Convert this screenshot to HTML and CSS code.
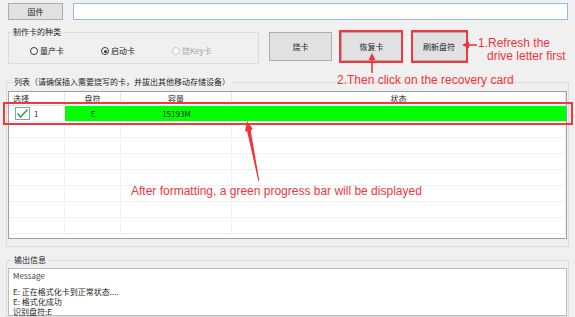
FILE: index.html
```html
<!DOCTYPE html>
<html lang="zh-CN">
<head>
<meta charset="UTF-8">
<title>量产工具</title>
<link rel="stylesheet" href="styles.css">
</head>
<body>

<div class="top-row">
  <button class="btn btn-fw">固件</button>
  <div class="path-input"></div>
</div>

<div class="mid-row">
  <fieldset class="group type-group">
    <legend>制作卡的种类</legend>
    <div class="radios">
      <label class="radio"><span class="dot"></span>量产卡</label>
      <label class="radio"><span class="dot checked"></span>启动卡</label>
      <label class="radio disabled"><span class="dot"></span>烧Key卡</label>
    </div>
  </fieldset>
  <div class="actions">
    <button class="btn btn-burn">烧卡</button>
    <button class="btn btn-restore">恢复卡</button>
    <button class="btn btn-refresh">刷新盘符</button>
  </div>
</div>

<fieldset class="group list-group">
  <legend>列表（请确保插入需要烧写的卡，并拔出其他移动存储设备）</legend>
  <div class="listview">
    <div class="lv-head">
      <div class="cell left">选择</div>
      <div class="cell">盘符</div>
      <div class="cell">容量</div>
      <div class="cell">状态</div>
    </div>
    <div class="lv-row done">
      <div class="cell left"><span class="check"><svg width="13" height="11" viewBox="0 0 13 11"><path d="M1.5 5.5 L4.5 9 L11.5 1.5" fill="none" stroke="#3ca33c" stroke-width="1.6"/></svg></span><span class="num">1</span></div>
      <div class="cell">E</div>
      <div class="cell">15193M</div>
      <div class="cell"></div>
    </div>
    <div class="lv-row"><div class="cell"></div><div class="cell"></div><div class="cell"></div><div class="cell"></div></div>
    <div class="lv-row"><div class="cell"></div><div class="cell"></div><div class="cell"></div><div class="cell"></div></div>
    <div class="lv-row"><div class="cell"></div><div class="cell"></div><div class="cell"></div><div class="cell"></div></div>
    <div class="lv-row"><div class="cell"></div><div class="cell"></div><div class="cell"></div><div class="cell"></div></div>
    <div class="lv-row"><div class="cell"></div><div class="cell"></div><div class="cell"></div><div class="cell"></div></div>
    <div class="lv-row"><div class="cell"></div><div class="cell"></div><div class="cell"></div><div class="cell"></div></div>
    <div class="lv-row"><div class="cell"></div><div class="cell"></div><div class="cell"></div><div class="cell"></div></div>
  </div>
</fieldset>

<fieldset class="group out-group">
  <legend>输出信息</legend>
  <div class="output">
    <div class="msg-title">Message</div>
    <div>E: 正在格式化卡到正常状态....</div>
    <div>E: 格式化成功</div>
    <div>识别盘符:E</div>
  </div>
</fieldset>

<!-- red annotations drawn over the screenshot -->
<div class="notes">
  <div class="mark mark-restore"></div>
  <div class="mark mark-refresh"></div>
  <div class="mark mark-row"></div>
  <div class="note note-1">1.Refresh the<br><span class="indent">drive letter first</span></div>
  <div class="note note-2">2.Then click on the recovery card</div>
  <div class="note note-3">After formatting, a green progress bar will be displayed</div>
  <svg class="arrows" width="575" height="317" viewBox="0 0 575 317">
    <line x1="477" y1="45" x2="468" y2="45" stroke="#f2333d" stroke-width="1.6"/>
    <polygon points="462,45 469,41.5 469,48.5" fill="#f2333d"/>
    <line x1="372" y1="73" x2="372" y2="58" stroke="#f2333d" stroke-width="1.6"/>
    <polygon points="372,53 368.5,60 375.5,60" fill="#f2333d"/>
    <polygon points="247,121 252.8,129 250.7,130.4 259.3,180.7 258.3,180.9 247.1,131.2 245,131.6" fill="#f2333d"/>
  </svg>
</div>

</body>
</html>
```

FILE: styles.css
```css
body {
  margin: 0;
  background-color: #f0f0f0;
  font-family: "Noto Sans CJK SC", "Noto Sans", sans-serif;
  font-size: 8px;
  color: #1e1e1e;
  width: 575px;
  height: 317px;
  overflow: hidden;
  position: relative;
}

.btn {
  box-sizing: border-box;
  border: 1px solid #adadad;
  background-color: #e1e1e1;
  font-family: inherit;
  font-size: 8px;
  color: #1e1e1e;
  padding: 0;
}

.top-row {
  display: flex;
  gap: 10px;
  height: 17px;
  padding: 3px 7px 0 8px;
}

.btn-fw {
  width: 55px;
  height: 17px;
}

.path-input {
  flex: 1;
  box-sizing: border-box;
  border: 1px solid #8fbde8;
  background-color: #fff;
}

.mid-row {
  display: flex;
  margin-top: 7px;
  padding-left: 8px;
}

.group {
  margin: 0;
  padding: 0;
  min-width: 0;
  border: 1px solid #dcdcdc;
}

.group legend {
  padding: 0 2px;
  margin-left: 2px;
  line-height: 10px;
  font-size: 8px;
}

.type-group {
  box-sizing: border-box;
  width: 251px;
  height: 37px;
}

.radios {
  display: flex;
  align-items: center;
  height: 26px;
  padding-left: 21px;
  padding-top: 1px;
}

.radio {
  display: flex;
  align-items: center;
  gap: 2px;
  width: 71px;
  line-height: 10px;
}

.dot {
  box-sizing: border-box;
  width: 8px;
  height: 8px;
  border: 1px solid #333;
  border-radius: 50%;
  background-color: #fff;
  position: relative;
}

.dot.checked::after {
  content: "";
  position: absolute;
  left: 1.5px;
  top: 1.5px;
  width: 3px;
  height: 3px;
  border-radius: 50%;
  background-color: #333;
}

.radio.disabled {
  color: #a6a6a6;
}

.radio.disabled .dot {
  border-color: #c4c4c4;
}

.actions {
  display: flex;
  gap: 9px;
  margin-left: 10px;
  padding-top: 5px;
}

.actions .btn {
  height: 29px;
}

.btn-burn {
  width: 63px;
}

.btn-restore {
  width: 61px;
}

.btn-refresh {
  width: 56px;
}

.list-group {
  margin: 13px 6px 0;
  padding: 4px 1px 7px;
}

.list-group legend {
  margin-left: 4px;
}

.listview {
  box-sizing: border-box;
  height: 148px;
  border: 1px solid #9a9fa8;
  background-color: #fff;
}

.lv-head,
.lv-row {
  display: grid;
  grid-template-columns: 56px 56px 111px 1fr;
}

.lv-head {
  box-sizing: border-box;
  height: 14px;
  border-bottom: 1px solid #e5e5e5;
  line-height: 14px;
}

.lv-head .cell {
  border-right: 1px solid #e5e5e5;
  text-align: center;
}

.lv-row {
  box-sizing: border-box;
  height: 16px;
  border-bottom: 1px solid #efefef;
}

.lv-row .cell {
  border-right: 1px solid #f2f2f2;
}

.cell.left {
  text-align: left;
  padding-left: 4px;
}

.lv-row.done {
  line-height: 15px;
}

.lv-row.done .cell {
  border-right: none;
  text-align: center;
  background-color: #00ff00;
}

.lv-row.done .cell.left {
  background-color: #fff;
  display: flex;
  align-items: center;
  padding-left: 6px;
}

.check {
  box-sizing: border-box;
  width: 15px;
  height: 13px;
  border: 1px solid #7b9dd4;
  display: flex;
  align-items: center;
  justify-content: center;
}

.num {
  margin-left: 4px;
  color: #3d2a6b;
}

.out-group {
  margin: 8px 6px 0;
  padding: 3px 1px 0;
}

.out-group legend {
  margin-left: 4px;
}

.output {
  height: 42px;
  border: 1px solid #b8bcc4;
  background-color: #fff;
  padding: 2px 4px;
  line-height: 10px;
}

.msg-title {
  margin-bottom: 6px;
  color: #444;
}

.notes {
  position: absolute;
  left: 0;
  top: 0;
  width: 575px;
  height: 317px;
  pointer-events: none;
}

.mark {
  position: absolute;
  box-sizing: border-box;
  border: 2px solid #f0393f;
}

.mark-restore {
  left: 339px;
  top: 30px;
  width: 64px;
  height: 33px;
}

.mark-refresh {
  left: 411px;
  top: 30px;
  width: 57px;
  height: 33px;
}

.mark-row {
  left: 3px;
  top: 102px;
  width: 570px;
  height: 23px;
}

.note {
  position: absolute;
  font-family: "Liberation Sans", Arial, sans-serif;
  font-size: 12px;
  line-height: 13px;
  color: #f2333d;
  white-space: nowrap;
}

.note-1 {
  left: 478px;
  top: 37px;
}

.note-1 .indent {
  padding-left: 9px;
}

.note-2 {
  left: 337px;
  top: 74px;
}

.note-3 {
  left: 131px;
  top: 185px;
}

.arrows {
  position: absolute;
  left: 0;
  top: 0;
}
```
